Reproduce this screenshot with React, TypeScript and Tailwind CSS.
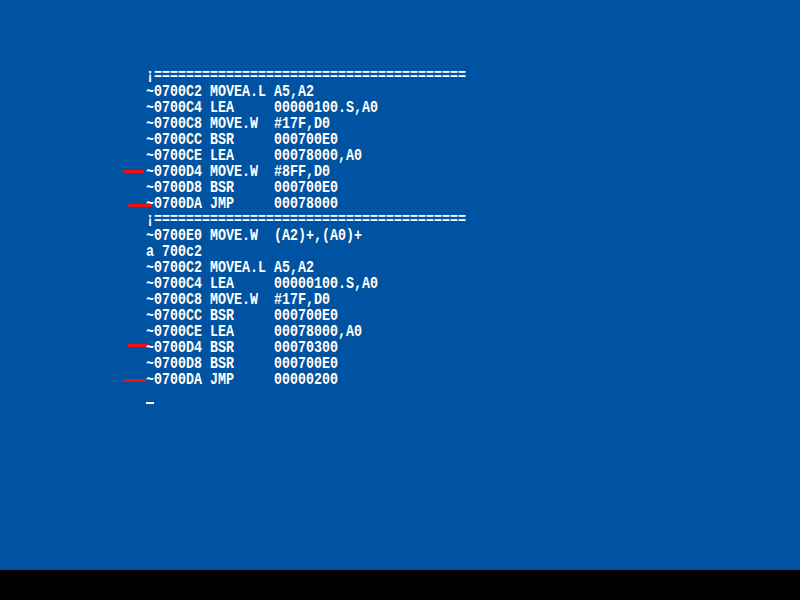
import React from 'react';

const SEP = '\u00a1' + '='.repeat(39);

type Line = { text: string; mark?: string };

const lines: Line[] = [
  { text: SEP },
  { text: '~0700C2 MOVEA.L A5,A2' },
  { text: '~0700C4 LEA     00000100.S,A0' },
  { text: '~0700C8 MOVE.W  #17F,D0' },
  { text: '~0700CC BSR     000700E0' },
  { text: '~0700CE LEA     00078000,A0' },
  { text: '~0700D4 MOVE.W  #8FF,D0', mark: 'left-[-23px] top-[6px] w-[21px]' },
  { text: '~0700D8 BSR     000700E0' },
  { text: '~0700DA JMP     00078000', mark: 'left-[-18px] top-[8px] w-[24px]' },
  { text: SEP },
  { text: '~0700E0 MOVE.W  (A2)+,(A0)+' },
  { text: 'a 700c2' },
  { text: '~0700C2 MOVEA.L A5,A2' },
  { text: '~0700C4 LEA     00000100.S,A0' },
  { text: '~0700C8 MOVE.W  #17F,D0' },
  { text: '~0700CC BSR     000700E0' },
  { text: '~0700CE LEA     00078000,A0' },
  { text: '~0700D4 BSR     00070300', mark: 'left-[-19px] top-[4px] w-[22px]' },
  { text: '~0700D8 BSR     000700E0' },
  { text: '~0700DA JMP     00000200', mark: 'left-[-23px] top-[7px] w-[23px]' },
];

export default function App() {
  return (
    <div className="w-[800px] h-[600px] bg-black flex flex-col">
      <div className="h-[570px] bg-[#0053a1] pl-[146px] pt-[68px] text-white font-['Liberation_Mono',monospace] font-bold">
        {lines.map((l, i) => (
          <div key={i} className="relative h-4">
            {l.mark && (
              <span className={`absolute h-[3px] rounded-full bg-[#f01010] ${l.mark}`} />
            )}
            <div className="whitespace-pre text-[17px] leading-4 origin-left scale-x-[0.7843]">
              {l.text}
            </div>
          </div>
        ))}
        {/* blank row with the cursor at its foot */}
        <div className="h-4 flex items-end">
          <span className="block w-2 h-[2px] bg-white" />
        </div>
      </div>
    </div>
  );
}
